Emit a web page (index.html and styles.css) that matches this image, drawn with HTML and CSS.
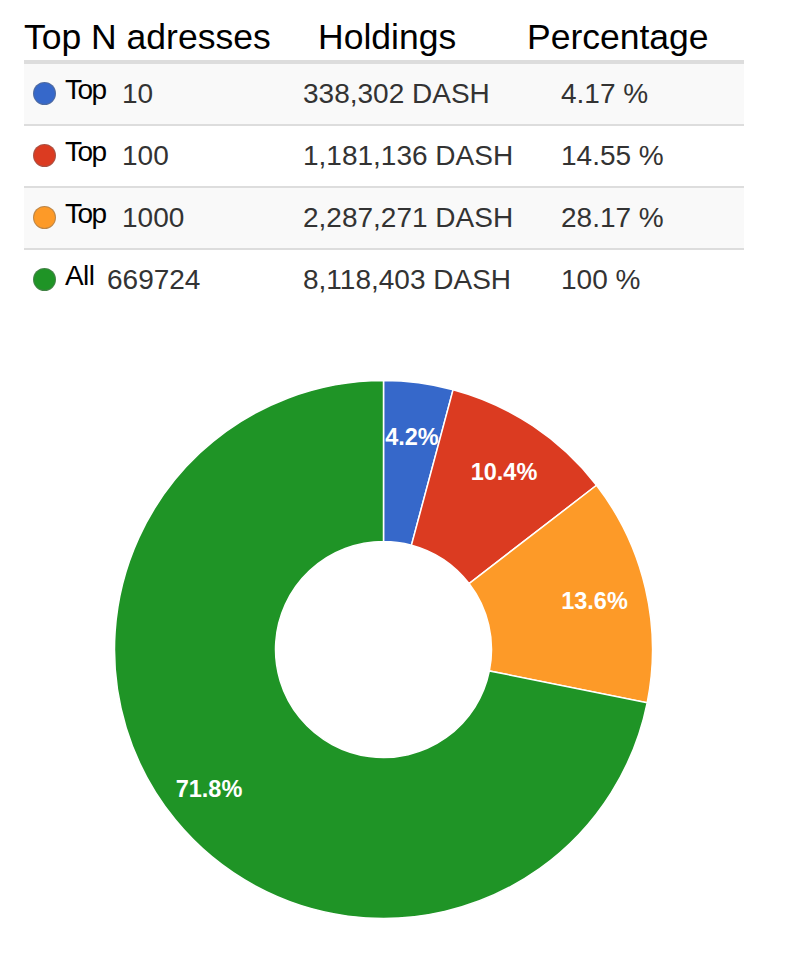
FILE: index.html
```html
<!DOCTYPE html>
<html>
<head>
<meta charset="utf-8">
<link rel="stylesheet" href="styles.css">
</head>
<body>
<div class="page">
  <div class="thead">
    <div class="th">Top N adresses</div>
    <div class="th">Holdings</div>
    <div class="th">Percentage</div>
  </div>
  <div class="tbody">
    <div class="row striped">
      <div class="cell first">
        <span class="dot blue"></span>
        <span class="lab lab-top">Top</span>
        <span class="num">10</span>
      </div>
      <div class="cell">338,302 DASH</div>
      <div class="cell">4.17 %</div>
    </div>
    <div class="row">
      <div class="cell first">
        <span class="dot red"></span>
        <span class="lab lab-top">Top</span>
        <span class="num">100</span>
      </div>
      <div class="cell">1,181,136 DASH</div>
      <div class="cell">14.55 %</div>
    </div>
    <div class="row striped">
      <div class="cell first">
        <span class="dot orange"></span>
        <span class="lab lab-top">Top</span>
        <span class="num">1000</span>
      </div>
      <div class="cell">2,287,271 DASH</div>
      <div class="cell">28.17 %</div>
    </div>
    <div class="row">
      <div class="cell first">
        <span class="dot green"></span>
        <span class="lab lab-all">All</span>
        <span class="num num-all">669724</span>
      </div>
      <div class="cell">8,118,403 DASH</div>
      <div class="cell">100 %</div>
    </div>
  </div>
  <svg class="chart" width="810" height="662" viewBox="0 0 810 662">
    <path class="slice s-blue" d="M383.5 70.5 A269 269 0 0 1 453.12 79.67 L411.45 235.18 A108 108 0 0 0 383.5 231.5 Z"/>
    <path class="slice s-red" d="M453.12 79.67 A269 269 0 0 1 596.55 175.28 L469.04 273.57 A108 108 0 0 0 411.45 235.18 Z"/>
    <path class="slice s-orange" d="M596.55 175.28 A269 269 0 0 1 647.17 392.82 L489.36 360.91 A108 108 0 0 0 469.04 273.57 Z"/>
    <path class="slice s-green" d="M647.17 392.82 A269 269 0 1 1 383.5 70.5 L383.5 231.5 A108 108 0 1 0 489.36 360.91 Z"/>
    <text class="pct" x="412" y="135">4.2%</text>
    <text class="pct" x="504" y="170">10.4%</text>
    <text class="pct" x="594.5" y="299">13.6%</text>
    <text class="pct" x="209" y="487">71.8%</text>
  </svg>
</div>
</body>
</html>
```
FILE: styles.css
```css
html, body {
  margin: 0;
  padding: 0;
  background: #ffffff;
}

.page {
  width: 810px;
  font-family: "Liberation Sans", Arial, sans-serif;
}

.thead {
  display: grid;
  grid-template-columns: 294px 209px 1fr;
  margin-left: 24px;
  width: 720px;
  height: 64px;
  border-bottom: 4px solid #dddddd;
  box-sizing: border-box;
  align-items: end;
}

.th {
  font-size: 35.5px;
  color: #000000;
  line-height: 40px;
  padding-bottom: 3px;
  white-space: nowrap;
}

.tbody {
  margin-left: 24px;
  width: 720px;
}

.row {
  display: grid;
  grid-template-columns: 270px 258px 1fr;
  height: 60px;
  align-items: center;
  border-top: 2px solid #dddddd;
  font-size: 28px;
  color: #333333;
}

.row:first-child {
  border-top: none;
}

.striped {
  background: #f9f9f9;
}

.cell {
  padding-left: 9px;
  white-space: nowrap;
  line-height: 32px;
}

.first {
  display: flex;
  align-items: center;
}

.dot {
  width: 23px;
  height: 23px;
  border-radius: 50%;
  box-sizing: border-box;
  border: 1px solid rgba(110, 110, 110, 0.45);
  flex: none;
  margin-top: -2px;
}

.blue { background: #3668ca; }
.red { background: #db3b21; }
.orange { background: #fd9a28; }
.green { background: #1f9426; }

.lab {
  display: block;
  white-space: nowrap;
  color: #000000;
  font-size: 28px;
  letter-spacing: -1.5px;
  margin-left: 9px;
  margin-top: -8px;
  flex: none;
}

.lab-top { width: 50px; }
.lab-all { width: 37px; letter-spacing: -0.6px; }

.num {
  margin-left: 7px;
}

.num-all {
  margin-left: 5px;
}

.chart {
  display: block;
}

.slice {
  stroke: #ffffff;
  stroke-width: 1.5;
  stroke-linejoin: miter;
}

.s-blue { fill: #3668ca; }
.s-red { fill: #db3b21; }
.s-orange { fill: #fd9a28; }
.s-green { fill: #1f9426; }

.pct {
  fill: #ffffff;
  font-family: "Liberation Sans", Arial, sans-serif;
  font-size: 23.5px;
  font-weight: bold;
  text-anchor: middle;
}
```
